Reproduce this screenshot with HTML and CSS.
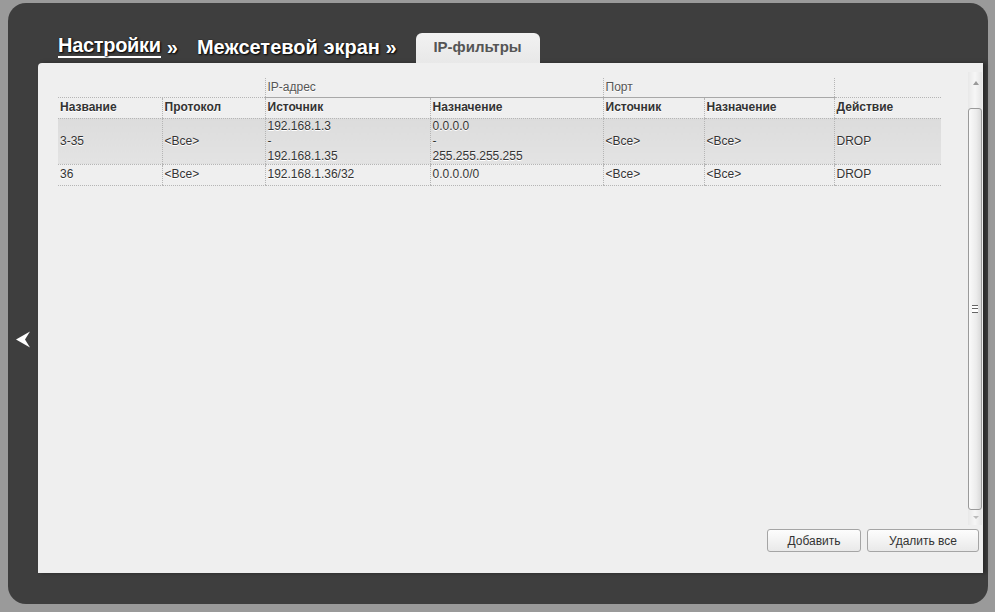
FILE: index.html
```html
<!DOCTYPE html>
<html lang="ru">
<head>
  <meta charset="UTF-8" />
  <title>IP-фильтры</title>
  <link rel="stylesheet" href="styles.css">
</head>
<body>

  <div class="frame">

    <!-- back arrow -->
    <a href="#" class="back">
      <svg width="15" height="17" viewBox="0 0 15 17"><polygon points="0,8.5 14,0.5 9,8.5 14,16.5" fill="#fff"/></svg>
    </a>

    <div class="crumbs">
      <a href="#" class="crumb first">Настройки</a><span class="crumb sep">»</span>
      <span class="crumb">Межсетевой экран »</span>
      <div class="tab">IP-фильтры</div>
    </div>

    <div class="panel">
      <div class="view">
        <div class="content">
          <table class="rules">
            <colgroup>
              <col style="width:104px"><col style="width:103px"><col style="width:165px"><col style="width:173px">
              <col style="width:101px"><col style="width:130px"><col style="width:107px">
            </colgroup>
            <thead>
              <tr class="groups">
                <th colspan="2" class="blank"></th>
                <th colspan="2" class="group">IP-адрес</th>
                <th colspan="2" class="group">Порт</th>
                <th class="blank side"></th>
              </tr>
              <tr class="heads">
                <th>Название</th>
                <th>Протокол</th>
                <th>Источник</th>
                <th>Назначение</th>
                <th>Источник</th>
                <th>Назначение</th>
                <th>Действие</th>
              </tr>
            </thead>
            <tbody>
              <tr class="hl">
                <td>3-35</td>
                <td>&lt;Все&gt;</td>
                <td>192.168.1.3<br>-<br>192.168.1.35</td>
                <td>0.0.0.0<br>-<br>255.255.255.255</td>
                <td>&lt;Все&gt;</td>
                <td>&lt;Все&gt;</td>
                <td>DROP</td>
              </tr>
              <tr>
                <td>36</td>
                <td>&lt;Все&gt;</td>
                <td>192.168.1.36/32</td>
                <td>0.0.0.0/0</td>
                <td>&lt;Все&gt;</td>
                <td>&lt;Все&gt;</td>
                <td>DROP</td>
              </tr>
            </tbody>
          </table>
        </div>

        <!-- fake scrollbar -->
        <div class="scrollbar">
          <div class="arrow up"></div>
          <div class="thumb"><div class="grip"></div></div>
          <div class="arrow down"></div>
        </div>
      </div>

      <div class="actions">
        <button class="btn add">Добавить</button>
        <button class="btn">Удалить все</button>
      </div>
    </div>

  </div>

</body>
</html>
```

FILE: styles.css
```css
body {
  margin: 0;
  background: #9a9a9a;
  font-family: 'Liberation Sans', Arial, sans-serif;
  font-size: 12px;
  color: #333;
}

.frame {
  position: relative;
  width: 950px;
  height: 571px;
  margin: 3px 0 0 8px;
  padding: 30px 0 0 30px;
  background: #3e3e3e;
  border-radius: 18px;
}

.back {
  position: absolute;
  left: 8px;
  top: 328px;
  line-height: 0;
}

/* breadcrumbs + tab */
.crumbs {
  display: flex;
  align-items: flex-end;
  height: 30px;
  padding-left: 20px;
}

.crumb {
  color: #fff;
  font-size: 20px;
  font-weight: bold;
  text-decoration: none;
  text-shadow: 1px 1px 2px #000, 0 0 1px #000;
  line-height: 24px;
  margin-bottom: 4px;
}

.crumb.first {
  border-bottom: 2px solid #fff;
  line-height: 21px;
  margin-bottom: 5px;
  letter-spacing: -0.3px;
}

.crumb.sep { margin: 0 19px 4px 6px; }

.tab {
  width: 124px;
  height: 30px;
  margin-left: 19px;
  background: linear-gradient(#f2f2f2, #e8e8e8);
  border-radius: 6px 6px 0 0;
  color: #555;
  font-size: 15px;
  font-weight: bold;
  text-align: center;
  line-height: 27px;
}

/* main panel */
.panel {
  display: flex;
  flex-direction: column;
  width: 945px;
  height: 510px;
  background: #efefef;
  border-radius: 4px 0 0 0;
  box-shadow: 3px 0 4px rgba(0,0,0,0.35);
}

.view {
  flex: 1;
  display: flex;
}

.content {
  flex: 1;
  padding: 15px 0 0 20px;
}

.rules {
  border-collapse: collapse;
  table-layout: fixed;
  width: 883px;
}

.rules th, .rules td {
  box-sizing: border-box;
  text-align: left;
  padding: 0 2px;
  line-height: 15px;
  height: 21px;
  vertical-align: middle;
  border-left: 1px dotted #b5b5b5;
  border-bottom: 1px dotted #b5b5b5;
  text-shadow: 0 1px 0 #fff;
}

.rules th:first-child, .rules td:first-child { border-left: none; }

.groups th {
  height: 19px;
  font-weight: normal;
  color: #555;
}

.groups .group { border-bottom: 1px solid #a8a8a8; }

.heads th { font-weight: bold; color: #333; height: 21px; }

.rules tr.hl td { height: 46px; background: linear-gradient(#dcdcdc, #e3e3e3); }

/* scrollbar */
.scrollbar {
  display: flex;
  flex-direction: column;
  width: 14px;
  margin: 9px 1px 0 0;
  background: linear-gradient(90deg, #e8e8e8, #f6f6f6 50%, #e4e4e4);
}

.arrow {
  height: 36px;
  position: relative;
}

.arrow.down { height: 15px; }

.arrow:after {
  content: '';
  position: absolute;
  left: 5px;
  border-left: 3px solid transparent;
  border-right: 3px solid transparent;
}

.arrow.up:after { top: 9px; border-bottom: 4px solid #999; }
.arrow.down:after { top: 6px; border-top: 3px solid #bbb; }

.thumb {
  flex: 1;
  display: flex;
  align-items: center;
  justify-content: center;
  border: 1px solid #9a9a9a;
  border-radius: 3px;
  background: linear-gradient(90deg, #fafafa, #ececec 60%, #d9d9d9);
}

.grip {
  width: 6px;
  height: 6px;
  border-top: 1px solid #666;
  border-bottom: 1px solid #666;
  background: linear-gradient(#fff 2px, #666 2px, #666 3px, #fff 3px);
}

/* buttons */
.actions {
  display: flex;
  justify-content: flex-end;
  gap: 6px;
  padding: 4px 4px 21px 0;
}

.btn {
  height: 23px;
  width: 112px;
  border: 1px solid #a5a5a5;
  border-radius: 3px;
  background: linear-gradient(#fdfdfd, #e9e9e9);
  font-family: 'Liberation Sans', Arial, sans-serif;
  font-size: 12px;
  color: #333;
}

.btn.add { width: 94px; }
```
